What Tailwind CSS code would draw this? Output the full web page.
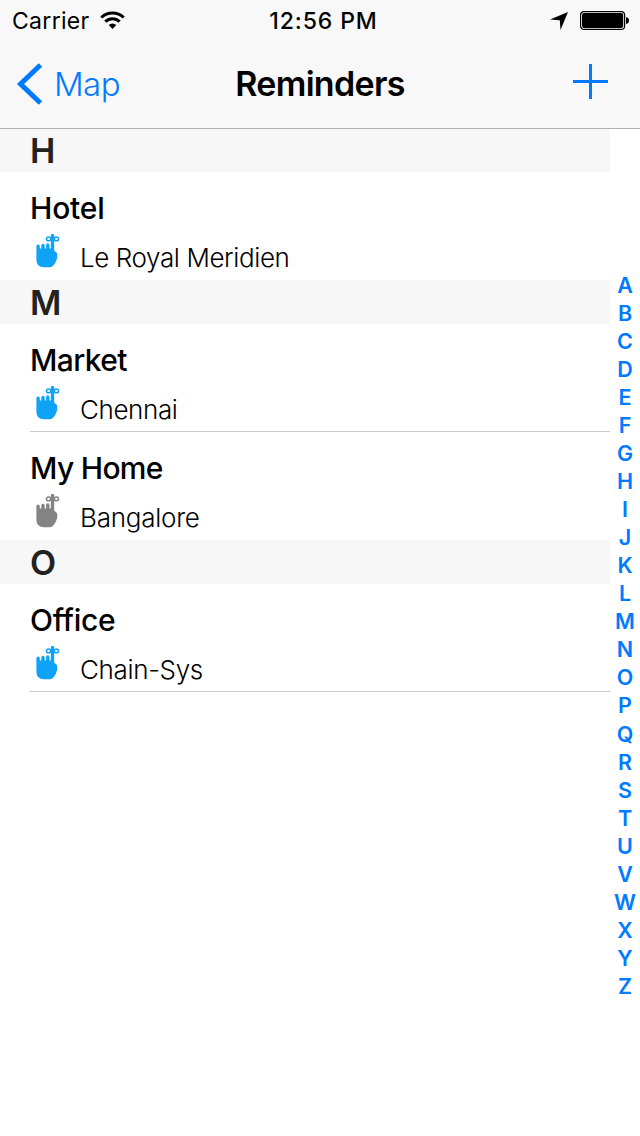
<!DOCTYPE html>
<html lang="en">
<head>
    <meta charset="UTF-8">
    <meta name="viewport" content="width=device-width, initial-scale=1.0">
    <title>Reminders</title>
    <script src="https://cdn.jsdelivr.net/npm/@tailwindcss/browser@4"></script>
</head>
<body class="w-[640px] h-[1136px] bg-white overflow-hidden font-['Inter','Liberation_Sans',sans-serif] text-black">

    <!-- Shared reminder icon -->
    <svg class="hidden">
        <symbol id="reminder" viewBox="0 0 24 34">
            <path fill="currentColor" d="M.4 12.200a1.700 1.700 0 0 1 3.400 0v2.300h1.500v-3.100a1.700 1.700 0 0 1 3.400 0v3.100h1.400v-3.600a1.700 1.700 0 0 1 3.400 0v3.600h1.300V1.600a1.700 1.700 0 0 1 3.400 0v15.200c2.500 1.300 3.500 3.300 3.100 5.900-.3 2.300-1.200 4.600-2.500 6.900-1.300 2.400-2.900 3.700-5.200 3.700H7.800c-4.400 0-7.400-2.700-7.400-7.200z"/>
            <g fill="none" stroke="currentColor" stroke-width="1.500">
                <ellipse cx="12.600" cy="4.900" rx="2.100" ry="1.900"/>
                <ellipse cx="20.400" cy="4.900" rx="2.100" ry="1.900"/>
            </g>
        </symbol>
    </svg>

    <header class="relative h-32 bg-[#f8f8f8] shadow-[0_1px_0_#b2b2b2]">
        <!-- Status bar -->
        <div class="grid grid-cols-3 h-10 pt-px text-[23px] leading-10">
            <div class="flex items-center pl-3">
                <span class="tracking-[0.3px]">Carrier</span>
                <svg class="ml-2.5 -mt-0.5" width="25" height="19" viewBox="0 0 25 19">
                    <g fill="none" stroke="#000" stroke-width="3">
                        <path d="M1.300 6.500a16 16 0 0 1 22.400 0"/>
                        <path d="M5.300 10.600a10.300 10.300 0 0 1 14.400 0"/>
                    </g>
                    <path d="M8.700 14.100a5.400 5.400 0 0 1 7.600 0L12.500 18z"/>
                </svg>
            </div>
            <div class="text-center font-medium tracking-[0.9px] pl-[7px]">12:56 PM</div>
            <div class="flex items-center justify-end gap-3 pr-2.5">
                <svg width="18" height="18" viewBox="0 0 18 18"><path d="M18 0L10.500 18L9.800 8.200L0 7.500z"/></svg>
                <svg class="-mt-0.5" width="50" height="19" viewBox="0 0 50 19">
                    <rect x=".6" y=".6" width="44" height="17.800" rx="3.500" fill="#fff" stroke="#000" stroke-width="1.200"/>
                    <rect x="2" y="2" width="41.200" height="15" rx="2"/>
                    <path d="M46 6q3 .5 3 3.500t-3 3.500z"/>
                </svg>
            </div>
        </div>
        <!-- Navigation bar -->
        <div class="grid grid-cols-3 h-22 text-[34px] leading-[88px]">
            <a href="#" class="flex h-[86px] items-center pl-4 text-[#007aff]">
                <svg class="mt-0.5" width="27" height="42" viewBox="0 0 27 42"><path d="M24.500 2L4.500 21L24.500 40" fill="none" stroke="currentColor" stroke-width="5"/></svg>
                <span class="pt-0.5 ml-[11px] font-[350] text-[33px] tracking-[-0.6px]">Map</span>
            </a>
            <h1 class="text-center font-semibold tracking-[-0.7px]">Reminders</h1>
            <button class="flex items-start justify-end pt-6 pr-8 text-[#007aff]">
                <svg width="35" height="35" viewBox="0 0 35 35"><path d="M16 0h3v35h-3zM0 16h35v3H0z" fill="currentColor"/></svg>
            </button>
        </div>
    </header>

    <main class="flex">
        <div class="w-[610px]">
            <h2 class="h-11 pt-px pl-[30px] bg-[#f7f7f7] text-[#222] text-[34px] leading-11 font-semibold">H</h2>
            <div class="h-[108px] pl-[30px] pt-[15px]">
                <div class="text-[30px] leading-[42px] font-medium tracking-[-0.2px]">Hotel</div>
                <div class="flex pl-1.5 pt-[5px]">
                    <svg class="w-6 h-[34px] text-[#0fa3f7]"><use href="#reminder"/></svg>
                    <span class="ml-5 pt-2 text-[26px] leading-8 font-light tracking-[-0.4px]">Le Royal Meridien</span>
                </div>
            </div>

            <h2 class="h-11 pt-px pl-[30px] bg-[#f7f7f7] text-[#222] text-[34px] leading-11 font-semibold">M</h2>
            <div class="h-[108px] ml-[30px] pt-[15px] border-b border-[#c8c7cc]">
                <div class="text-[30px] leading-[42px] font-medium tracking-[-0.6px]">Market</div>
                <div class="flex pl-1.5 pt-[5px]">
                    <svg class="w-6 h-[34px] text-[#0fa3f7]"><use href="#reminder"/></svg>
                    <span class="ml-5 pt-2 text-[26px] leading-8 font-light tracking-[-0.4px]">Chennai</span>
                </div>
            </div>
            <div class="h-[108px] pl-[30px] pt-[15px]">
                <div class="text-[30px] leading-[42px] font-medium tracking-[-0.7px]">My Home</div>
                <div class="flex pl-1.5 pt-[5px]">
                    <svg class="w-6 h-[34px] text-[#848484]"><use href="#reminder"/></svg>
                    <span class="ml-5 pt-2 text-[26px] leading-8 font-light tracking-[-0.25px]">Bangalore</span>
                </div>
            </div>

            <h2 class="h-11 pt-px pl-[30px] bg-[#f7f7f7] text-[#222] text-[34px] leading-11 font-semibold">O</h2>
            <div class="h-[108px] ml-[30px] pt-[15px] border-b border-[#c8c7cc]">
                <div class="text-[30px] leading-[42px] font-medium tracking-[-0.3px]">Office</div>
                <div class="flex pl-1.5 pt-[5px]">
                    <svg class="w-6 h-[34px] text-[#0fa3f7]"><use href="#reminder"/></svg>
                    <span class="ml-5 pt-2 text-[26px] leading-8 font-light tracking-[-0.35px]">Chain-Sys</span>
                </div>
            </div>
        </div>

        <!-- Alphabet index -->
        <nav class="w-[30px] pt-[143px] flex flex-col items-center text-[21.5px] leading-7 font-[560] text-[#007aff]">
            <span>A</span>
            <span>B</span>
            <span>C</span>
            <span>D</span>
            <span>E</span>
            <span>F</span>
            <span>G</span>
            <span>H</span>
            <span>I</span>
            <span>J</span>
            <span>K</span>
            <span>L</span>
            <span>M</span>
            <span>N</span>
            <span>O</span>
            <span>P</span>
            <span class="pt-px">Q</span>
            <span>R</span>
            <span>S</span>
            <span>T</span>
            <span>U</span>
            <span>V</span>
            <span>W</span>
            <span>X</span>
            <span>Y</span>
            <span>Z</span>
        </nav>
    </main>
</body>
</html>
